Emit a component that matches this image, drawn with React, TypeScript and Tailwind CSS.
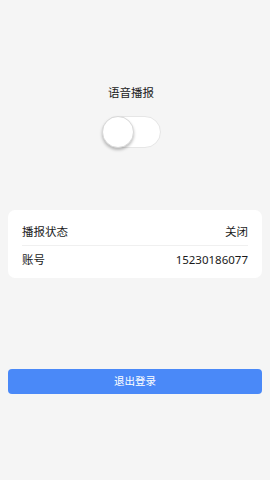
import { useState } from 'react';

export default function App() {
  const [on, setOn] = useState(false);

  return (
    <div
      className="w-[270px] h-[480px] bg-[#f5f5f5] flex flex-col"
      style={{ fontFamily: '"Noto Sans", "Noto Sans CJK SC", sans-serif' }}
    >
      {/* Voice broadcast switch */}
      <div className="flex flex-col items-center pt-[84px] pr-[8px]">
        <div className="text-[11.5px] leading-[17px] text-[#1a1a1a]">语音播报</div>
        <button
          onClick={() => setOn(!on)}
          className={`mt-[15px] w-[59px] h-[32px] rounded-full border border-[#e6e6e6] flex items-center p-0 ${
            on ? 'bg-[#4a89f8] justify-end' : 'bg-white justify-start'
          }`}
        >
          <span className="w-[32px] h-[32px] -m-px rounded-full bg-white border border-[#d9d9d9] shadow-[0_2px_3px_rgba(0,0,0,0.25)]" />
        </button>
      </div>

      {/* Info card */}
      <div className="mx-2 mt-[62px] bg-white rounded-[7px] px-[14px] pt-[8px] pb-[4px]">
        <div className="h-[28px] flex items-center justify-between border-b border-[#f0f0f0] text-[11.5px] text-[#1a1a1a]">
          <span>播报状态</span>
          <span>{on ? '开启' : '关闭'}</span>
        </div>
        <div className="h-[28px] flex items-center justify-between text-[11.5px] text-[#1a1a1a]">
          <span>账号</span>
          <span>15230186077</span>
        </div>
      </div>

      {/* Logout */}
      <div className="px-2 mt-[91px]">
        <button className="w-full h-[25px] rounded-[4px] bg-[#4a89f8] text-white text-[10.5px] flex items-center justify-center">
          退出登录
        </button>
      </div>
    </div>
  );
}
